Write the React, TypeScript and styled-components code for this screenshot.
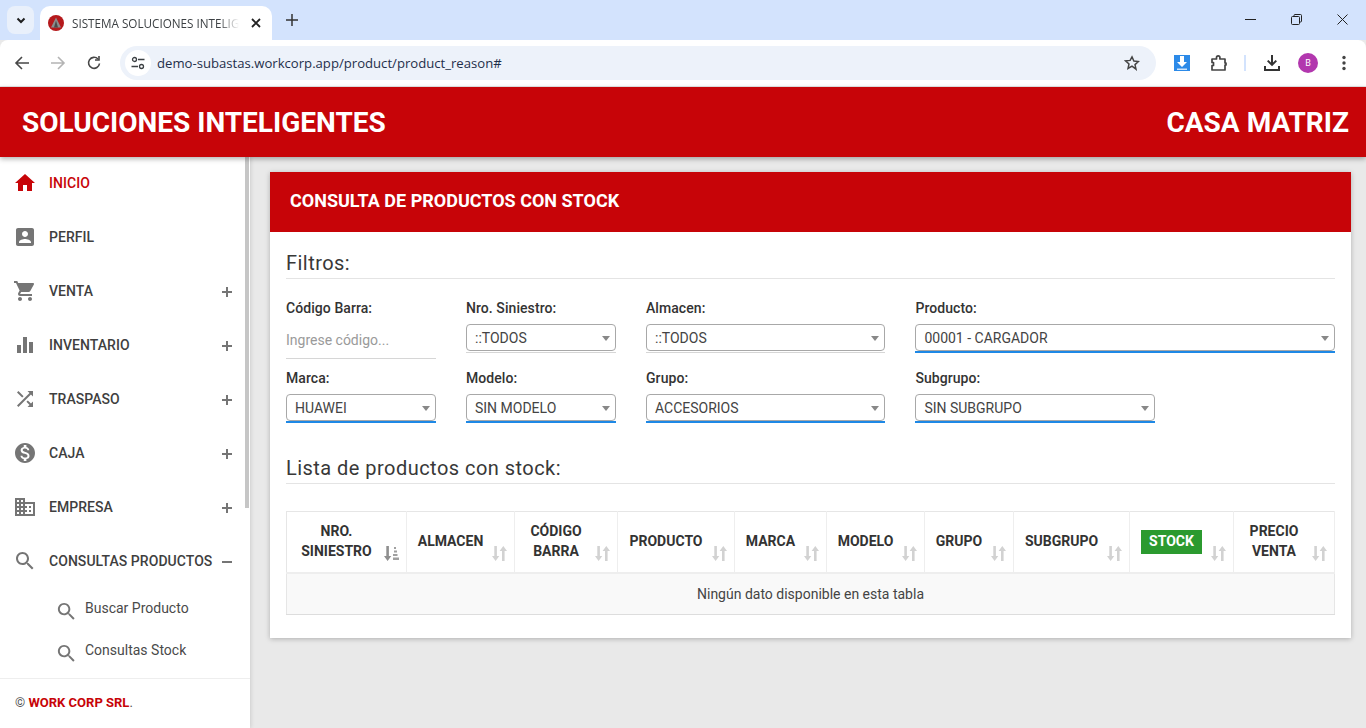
import React from "react";
import styled, { createGlobalStyle } from "styled-components";

const icons: Record<string, string> = {
  home: "M10 20v-6h4v6h5v-8h3L12 3 2 12h3v8z",
  profile:
    "M3 5v14c0 1.1.89 2 2 2h14c1.1 0 2-.9 2-2V5c0-1.1-.9-2-2-2H5c-1.11 0-2 .9-2 2zm12 4c0 1.66-1.34 3-3 3s-3-1.34-3-3 1.34-3 3-3 3 1.34 3 3zm-9 8c0-2 4-3.1 6-3.1s6 1.1 6 3.1v1H6v-1z",
  cart: "M7 18c-1.1 0-1.99.9-1.99 2S5.9 22 7 22s2-.9 2-2-.9-2-2-2zM1 2v2h2l3.6 7.59-1.35 2.45c-.16.28-.25.61-.25.96 0 1.1.9 2 2 2h12v-2H7.42c-.14 0-.25-.11-.25-.25l.03-.12.9-1.63h7.45c.75 0 1.41-.41 1.75-1.03l3.58-6.49c.08-.14.12-.31.12-.48 0-.55-.45-1-1-1H5.21l-.94-2H1zm16 16c-1.1 0-1.99.9-1.99 2s.89 2 1.99 2 2-.9 2-2-.9-2-2-2z",
  bars: "M10 20h4V4h-4v16zm-6 0h4v-8H4v8zM16 9v11h4V9h-4z",
  shuffle:
    "M10.59 9.17L5.41 4 4 5.41l5.17 5.17 1.42-1.41zM14.5 4l2.04 2.04L4 18.59 5.41 20 17.96 7.46 20 9.5V4h-5.5zm.33 9.41l-1.41 1.41 3.13 3.13L14.5 20H20v-5.5l-2.04 2.04-3.13-3.13z",
  money:
    "M12 2C6.48 2 2 6.48 2 12s4.48 10 10 10 10-4.48 10-10S17.52 2 12 2zm1.41 16.09V20h-2.67v-1.93c-1.71-.36-3.16-1.46-3.27-3.4h1.96c.1 1.05.82 1.87 2.65 1.87 1.96 0 2.4-.98 2.4-1.59 0-.83-.44-1.61-2.67-2.14-2.48-.6-4.18-1.62-4.18-3.67 0-1.72 1.39-2.84 3.11-3.21V4h2.67v1.95c1.86.45 2.79 1.86 2.85 3.39H14.3c-.05-1.11-.64-1.87-2.22-1.87-1.5 0-2.4.68-2.4 1.64 0 .84.65 1.39 2.67 1.91s4.18 1.39 4.18 3.91c-.01 1.83-1.38 2.83-3.12 3.16z",
  domain:
    "M12 7V3H2v18h20V7H12zM6 19H4v-2h2v2zm0-4H4v-2h2v2zm0-4H4V9h2v2zm0-4H4V5h2v2zm4 12H8v-2h2v2zm0-4H8v-2h2v2zm0-4H8V9h2v2zm0-4H8V5h2v2zm10 12h-8v-2h2v-2h-2v-2h2v-2h-2V9h8v10zm-2-8h-2v2h2v-2zm0 4h-2v2h2v-2z",
  search:
    "M15.5 14h-.79l-.28-.27C15.41 12.59 16 11.11 16 9.5 16 5.91 13.09 3 9.5 3S3 5.91 3 9.5 5.91 16 9.5 16c1.61 0 3.09-.59 4.23-1.57l.27.28v.79l5 4.99L20.49 19l-4.99-5zm-6 0C7.01 14 5 11.99 5 9.5S7.01 5 9.5 5 14 7.01 14 9.5 11.99 14 9.5 14z",
};

const GlobalStyle = createGlobalStyle`
  * { box-sizing: border-box; }
  html, body { margin: 0; height: 100%; overflow: hidden; }
  body { font-family: Roboto, "Liberation Sans", sans-serif; background: #e9e9e9; }
`;

const Page = styled.div`
  display: flex;
  flex-direction: column;
  width: 1366px;
  height: 728px;
  overflow: hidden;
`;

/* browser frame */
const TabStrip = styled.div`
  height: 40px;
  background: #d3e3fd;
  display: flex;
  align-items: flex-end;
  padding-left: 7px;
`;
const TabMenu = styled.div`
  width: 27px;
  height: 28px;
  margin: 0 6px 6px 0;
  border-radius: 8px;
  background: #e9f0fb;
  display: flex;
  align-items: center;
  justify-content: center;
`;
const Tab = styled.div`
  width: 232px;
  height: 34px;
  background: #fff;
  border-radius: 10px 10px 0 0;
  display: flex;
  align-items: center;
  padding: 0 11px 0 8px;
  font-family: "Open Sans", sans-serif;
  font-size: 11.7px;
  color: #3c4043;
`;
const TabTitle = styled.span`
  flex: 1;
  margin: 0 12px 0 8px;
  white-space: nowrap;
  overflow: hidden;
  -webkit-mask-image: linear-gradient(to right, #000 88%, transparent);
  mask-image: linear-gradient(to right, #000 88%, transparent);
`;
const NewTab = styled.div`
  margin: 0 0 10px 14px;
  height: 16px;
  display: flex;
`;
const WindowButtons = styled.div`
  margin-left: auto;
  display: flex;
  align-items: center;
  gap: 35px;
  padding: 0 18px 15px 0;
`;
const Toolbar = styled.div`
  height: 47px;
  background: #fff;
  border-radius: 8px 8px 0 0;
  display: flex;
  align-items: center;
  padding: 0 13px 0 14px;
  border-bottom: 1px solid #e6e6e6;
`;
const NavButtons = styled.div`
  display: flex;
  align-items: center;
  gap: 20px;
  width: 106px;
`;
const Omnibox = styled.div`
  width: 1036px;
  height: 34px;
  border-radius: 17px;
  background: #edf2fa;
  display: flex;
  align-items: center;
  padding: 0 16px 0 5px;
`;
const SiteBadge = styled.div`
  width: 26px;
  height: 26px;
  border-radius: 50%;
  background: #fff;
  display: flex;
  align-items: center;
  justify-content: center;
`;
const Url = styled.span`
  flex: 1;
  margin-left: 6px;
  font-family: "Open Sans", sans-serif;
  font-size: 13.14px;
  color: #1f2f4a;
`;
const ToolbarIcons = styled.div`
  display: flex;
  align-items: center;
  margin-left: 18px;
  gap: 18px;
`;
const ExtensionIcon = styled.svg`
  margin-right: 2px;
`;
const Divider = styled.div`
  width: 2px;
  height: 16px;
  background: #d3e3fd;
  margin-left: -2px;
`;
const Avatar = styled.div`
  width: 20px;
  height: 20px;
  border-radius: 50%;
  background: #b237ae;
  color: #fff;
  font-size: 9px;
  display: flex;
  align-items: center;
  justify-content: center;
  margin-right: 6px;
`;

/* app */
const Header = styled.header`
  height: 70px;
  flex: none;
  background: #c70408;
  color: #fff;
  display: flex;
  align-items: center;
  justify-content: space-between;
  padding: 0 17px 0 22px;
  font-size: 28px;
  font-weight: 700;
  box-shadow: 0 2px 5px rgba(0, 0, 0, 0.3);
  position: relative;
  z-index: 3;
`;
const Body = styled.div`
  flex: 1;
  display: flex;
  min-height: 0;
`;
const Sidebar = styled.aside`
  width: 250px;
  background: #fff;
  box-shadow: 1px 0 4px rgba(0, 0, 0, 0.12);
  position: relative;
  z-index: 2;
  display: flex;
  flex-direction: column;
`;
const ScrollThumb = styled.div`
  position: absolute;
  top: 0;
  right: 1px;
  width: 4px;
  height: 351px;
  background: #c6c6c6;
`;
const Menu = styled.nav`
  flex: 1;
  min-height: 0;
`;
const Item = styled.div`
  height: 54px;
  display: flex;
  align-items: center;
  padding: 0 18px 2px 13px;
`;
const ItemIcon = styled.svg<{ $active?: boolean }>`
  width: 24px;
  height: 24px;
  flex: none;
  fill: ${(p) => (p.$active ? "#c70408" : "#757575")};
`;
const ItemLabel = styled.span<{ $active?: boolean }>`
  flex: 1;
  margin-left: 12px;
  font-size: 14px;
  font-weight: 500;
  letter-spacing: 0.05px;
  color: ${(p) => (p.$active ? "#c70408" : "#3f3f3f")};
  white-space: nowrap;
`;
const Toggle = styled.span`
  width: 10px;
  height: 10px;
  flex: none;
  position: relative;
  top: 1px;
  &::before {
    content: "";
    position: absolute;
    left: 0;
    right: 0;
    top: 4px;
    height: 1.5px;
    background: #757575;
  }
`;
const Plus = styled(Toggle)`
  &::after {
    content: "";
    position: absolute;
    top: 0;
    bottom: 0;
    left: 4.25px;
    width: 1.5px;
    background: #757575;
  }
`;
const SubList = styled.div`
  padding-top: 6px;
`;
const SubItem = styled.div`
  height: 42px;
  display: flex;
  align-items: flex-start;
  padding: 0 0 0 55px;
`;
const SubIcon = styled.svg`
  width: 23px;
  height: 23px;
  fill: #757575;
  margin-top: 5px;
`;
const SubLabel = styled.span`
  margin: 3px 0 0 7px;
  font-size: 14px;
  color: #4a4a4a;
  line-height: 20px;
`;
const Footer = styled.footer`
  height: 50px;
  flex: none;
  border-top: 1px solid #eee;
  padding: 17px 0 0 15px;
  font-size: 13px;
  line-height: 14px;
  color: #555;
  b {
    color: #c70408;
    font-weight: 700;
  }
`;
const Main = styled.main`
  flex: 1;
  padding: 15px 15px 0 20px;
  min-width: 0;
`;
const Card = styled.section`
  background: #fff;
  box-shadow: 0 1px 5px rgba(0, 0, 0, 0.25);
  height: 466px;
`;
const CardTitle = styled.h2`
  margin: 0;
  height: 60px;
  background: #c70408;
  color: #fff;
  font-size: 18px;
  font-weight: 700;
  line-height: 57px;
  padding-left: 20px;
`;
const CardBody = styled.div`
  padding: 17px 16px 0;
`;
const SectionTitle = styled.h3`
  margin: 0;
  height: 30px;
  font-size: 20px;
  font-weight: 400;
  line-height: 28px;
  letter-spacing: 0.46px;
  color: #383838;
  border-bottom: 1px solid #e4e4e4;
`;
const FilterGrid = styled.div`
  display: grid;
  grid-template-columns: 150px 150px 239.4px 419.6px;
  column-gap: 30px;
  margin-top: 19px;
  margin-bottom: 16px;
`;
const Field = styled.div`
  height: 70px;
`;
const FieldLabel = styled.label`
  display: block;
  font-size: 14px;
  font-weight: 500;
  line-height: 20px;
  letter-spacing: 0.07px;
  color: #333;
  margin-bottom: 6px;
`;
const TextField = styled.div`
  height: 35px;
  border-bottom: 1px solid #d6d6d6;
  font-size: 14px;
  line-height: 33px;
  color: #9a9a9a;
`;
const SelectFrame = styled.div<{ $chosen?: boolean; $width?: number }>`
  height: 29px;
  width: ${(p) => (p.$width ? `${p.$width}px` : "100%")};
  border-bottom: ${(p) => (p.$chosen ? "2px solid #1e88e5" : "1px solid #d6d6d6")};
`;
const SelectValue = styled.div`
  height: 27px;
  position: relative;
  font-size: 14px;
  color: #444;
  line-height: 27px;
  padding-left: 8px;
  border: 1px solid #a8a8a8;
  border-radius: 4px;
  background: #fff;
  &::after {
    content: "";
    position: absolute;
    right: 5px;
    top: 11px;
    border-left: 4px solid transparent;
    border-right: 4px solid transparent;
    border-top: 5px solid #888;
  }
`;
const Table = styled.table`
  width: 1048px;
  margin-top: 27px;
  table-layout: fixed;
  border-collapse: collapse;
  border: 1px solid #e6e6e6;
`;
const Th = styled.th`
  height: 61px;
  position: relative;
  padding: 0 29px 2px 9px;
  font-size: 14px;
  font-weight: 700;
  line-height: 20px;
  color: #333;
  text-align: center;
  border-right: 1px solid #eee;
  border-bottom: 2px solid #eee;
`;
const SortIcon = styled.svg`
  position: absolute;
  right: 7px;
  bottom: 11px;
  width: 15px;
  height: 15px;
`;
const StockBadge = styled.span`
  display: inline-block;
  background: #2b9a2f;
  color: #fff;
  padding: 0 8px;
  height: 24px;
  margin-top: 2px;
  line-height: 23px;
`;
const EmptyCell = styled.td`
  height: 42px;
  background: #f9f9f9;
  text-align: center;
  font-size: 14px;
  color: #444;
  border-bottom: 1px solid #ddd;
`;

const MaterialIcon: React.FC<{ name: string; active?: boolean }> = ({ name, active }) => (
  <ItemIcon viewBox="0 0 24 24" $active={active}>
    <path d={icons[name]} />
  </ItemIcon>
);

const Select: React.FC<{ value: string; chosen?: boolean; width?: number }> = ({ value, chosen, width }) => (
  <SelectFrame $chosen={chosen} $width={width}>
    <SelectValue>{value}</SelectValue>
  </SelectFrame>
);

const menu = [
  { icon: "home", label: "INICIO", active: true },
  { icon: "profile", label: "PERFIL" },
  { icon: "cart", label: "VENTA", more: true },
  { icon: "bars", label: "INVENTARIO", more: true },
  { icon: "shuffle", label: "TRASPASO", more: true },
  { icon: "money", label: "CAJA", more: true },
  { icon: "domain", label: "EMPRESA", more: true },
];

const columns = [
  { width: 120, title: ["NRO.", "SINIESTRO"], sorted: true },
  { width: 108, title: ["ALMACEN"] },
  { width: 103, title: ["CÓDIGO", "BARRA"] },
  { width: 117, title: ["PRODUCTO"] },
  { width: 92, title: ["MARCA"] },
  { width: 98, title: ["MODELO"] },
  { width: 89, title: ["GRUPO"] },
  { width: 116, title: ["SUBGRUPO"] },
  { width: 104, title: ["STOCK"], badge: true },
  { width: 101, title: ["PRECIO", "VENTA"] },
];

const Sort: React.FC<{ sorted?: boolean }> = ({ sorted }) =>
  sorted ? (
    <SortIcon viewBox="0 0 15 15" fill="#8f8f8f">
      <path d="M2.300 0h2.600v10h2.400L3.600 15 0 10h2.300z" />
      <path d="M10 1h2v2h-2zM10 4.500h3v2h-3zM9 8h4.500v2H9zM9 11.500h6V14H9z" fill="#a0a0a0" />
    </SortIcon>
  ) : (
    <SortIcon viewBox="0 0 15 15" fill="#d2d2d2">
      <path d="M2.300 0h2.600v10h2.400L3.600 15 0 10h2.300z" />
      <path d="M10 15h2.600V5H15L11.300 0 7.600 5H10z" />
    </SortIcon>
  );

const App: React.FC = () => (
  <Page>
    <GlobalStyle />
    <TabStrip>
      <TabMenu>
        <svg width="12" height="12" viewBox="0 0 12 12" fill="none" stroke="#1f1f1f" strokeWidth="2">
          <path d="M2.500 4.500 6 8l3.500-3.500" />
        </svg>
      </TabMenu>
      <Tab>
        <svg width="16" height="16" viewBox="0 0 16 16">
          <circle cx="8" cy="8" r="8" fill="#b5191c" />
          <path d="M8 2.500 13 12.500H3z" fill="#8d8d8d" />
          <path d="M8 5.500 10 12.500H6z" fill="#4a4a4a" />
        </svg>
        <TabTitle>SISTEMA SOLUCIONES INTELIGENTES</TabTitle>
        <svg width="10" height="10" viewBox="0 0 10 10" stroke="#222" strokeWidth="1.800">
          <path d="M1 1l8 8M9 1l-8 8" />
        </svg>
      </Tab>
      <NewTab>
        <svg width="12" height="12" viewBox="0 0 12 12" stroke="#333" strokeWidth="1.500">
          <path d="M6 0v12M0 6h12" />
        </svg>
      </NewTab>
      <WindowButtons>
        <svg width="11" height="11" viewBox="0 0 11 11" stroke="#222" strokeWidth="1">
          <path d="M0 5.500h11" />
        </svg>
        <svg width="11" height="11" viewBox="0 0 11 11" fill="none" stroke="#222" strokeWidth="1">
          <rect x=".5" y="2.500" width="8" height="8" rx="1" />
          <path d="M3 2.500V1.500a1 1 0 0 1 1-1h5.500a1 1 0 0 1 1 1V7a1 1 0 0 1-1 1H8.500" />
        </svg>
        <svg width="11" height="11" viewBox="0 0 11 11" stroke="#222" strokeWidth="1">
          <path d="M.5.5l10 10M10.500.5l-10 10" />
        </svg>
      </WindowButtons>
    </TabStrip>
    <Toolbar>
      <NavButtons>
        <svg width="16" height="16" viewBox="0 0 16 16" fill="none" stroke="#474747" strokeWidth="1.600">
          <path d="M15 8H2M8 2 2 8l6 6" />
        </svg>
        <svg width="16" height="16" viewBox="0 0 16 16" fill="none" stroke="#b4b4b4" strokeWidth="1.600">
          <path d="M1 8h13M8 2l6 6-6 6" />
        </svg>
        <svg width="16" height="16" viewBox="0 0 16 16" fill="none" stroke="#474747" strokeWidth="1.600">
          <path d="M13.500 8.500A5.500 5.500 0 1 1 12 4" />
          <path d="M13 1v4H9" />
        </svg>
      </NavButtons>
      <Omnibox>
        <SiteBadge>
          <svg width="14" height="14" viewBox="0 0 14 14" fill="none" stroke="#3c4043" strokeWidth="1.300">
            <circle cx="3.500" cy="3.500" r="2" />
            <path d="M7 3.500h6.500M.5 10.500H7" />
            <circle cx="10.500" cy="10.500" r="2" />
          </svg>
        </SiteBadge>
        <Url>demo-subastas.workcorp.app/product/product_reason#</Url>
        <svg width="16" height="16" viewBox="0 0 24 24" fill="none" stroke="#444" strokeWidth="2.200">
          <path d="M12 2.800l2.800 6.300 6.800.7-5.100 4.600 1.500 6.800L12 16.700l-6 3.500 1.500-6.800-5.100-4.600 6.800-.7z" />
        </svg>
      </Omnibox>
      <ToolbarIcons>
        <ExtensionIcon width="16" height="16" viewBox="0 0 16 16">
          <rect width="16" height="16" fill="#2c8ae8" />
          <path d="M6 1h4v6h3l-5 5-5-5h3z" fill="#fff" />
          <path d="M3 13.500h10V15H3z" fill="#cfe5fb" />
        </ExtensionIcon>
        <svg width="18" height="18" viewBox="0 0 18 18" fill="none" stroke="#444" strokeWidth="1.700">
          <path d="M2 5h4.500V3.500a1.700 1.700 0 0 1 3.400 0V5H15v4h1v2h-1v5H2v-4.500h1.500v-3H2z" strokeLinejoin="round" />
        </svg>
        <Divider />
        <svg width="16" height="16" viewBox="0 0 16 16" fill="#333">
          <path d="M7 0h2v7.500l2.600-2.600L13 6.300 8 11.300l-5-5 1.400-1.400L7 7.500z" />
          <path d="M0 11h2v3h12v-3h2v5H0z" />
        </svg>
        <Avatar>B</Avatar>
        <svg width="4" height="16" viewBox="0 0 4 16" fill="#444">
          <circle cx="2" cy="2.500" r="1.700" />
          <circle cx="2" cy="8" r="1.700" />
          <circle cx="2" cy="13.500" r="1.700" />
        </svg>
      </ToolbarIcons>
    </Toolbar>

    <Header>
      <span>SOLUCIONES INTELIGENTES</span>
      <span>CASA MATRIZ</span>
    </Header>
    <Body>
      <Sidebar>
        <ScrollThumb />
        <Menu>
          {menu.map((m) => (
            <Item key={m.label}>
              <MaterialIcon name={m.icon} active={m.active} />
              <ItemLabel $active={m.active}>{m.label}</ItemLabel>
              {m.more && <Plus />}
            </Item>
          ))}
          <Item>
            <MaterialIcon name="search" />
            <ItemLabel>CONSULTAS PRODUCTOS</ItemLabel>
            <Toggle />
          </Item>
          <SubList>
            <SubItem>
              <SubIcon viewBox="0 0 24 24">
                <path d={icons.search} />
              </SubIcon>
              <SubLabel>Buscar Producto</SubLabel>
            </SubItem>
            <SubItem>
              <SubIcon viewBox="0 0 24 24">
                <path d={icons.search} />
              </SubIcon>
              <SubLabel>Consultas Stock</SubLabel>
            </SubItem>
          </SubList>
        </Menu>
        <Footer>
          © <b>WORK CORP SRL</b>.
        </Footer>
      </Sidebar>
      <Main>
        <Card>
          <CardTitle>CONSULTA DE PRODUCTOS CON STOCK</CardTitle>
          <CardBody>
            <SectionTitle>Filtros:</SectionTitle>
            <FilterGrid>
              <Field>
                <FieldLabel>Código Barra:</FieldLabel>
                <TextField>Ingrese código...</TextField>
              </Field>
              <Field>
                <FieldLabel>Nro. Siniestro:</FieldLabel>
                <Select value="::TODOS" />
              </Field>
              <Field>
                <FieldLabel>Almacen:</FieldLabel>
                <Select value="::TODOS" />
              </Field>
              <Field>
                <FieldLabel>Producto:</FieldLabel>
                <Select value="00001 - CARGADOR" chosen />
              </Field>
              <Field>
                <FieldLabel>Marca:</FieldLabel>
                <Select value="HUAWEI" chosen />
              </Field>
              <Field>
                <FieldLabel>Modelo:</FieldLabel>
                <Select value="SIN MODELO" chosen />
              </Field>
              <Field>
                <FieldLabel>Grupo:</FieldLabel>
                <Select value="ACCESORIOS" chosen />
              </Field>
              <Field>
                <FieldLabel>Subgrupo:</FieldLabel>
                <Select value="SIN SUBGRUPO" chosen width={240} />
              </Field>
            </FilterGrid>
            <SectionTitle>Lista de productos con stock:</SectionTitle>
            <Table>
              <colgroup>
                {columns.map((c) => (
                  <col key={c.title[0]} width={c.width} />
                ))}
              </colgroup>
              <thead>
                <tr>
                  {columns.map((c) => (
                    <Th key={c.title[0]}>
                      {c.badge ? (
                        <StockBadge>{c.title[0]}</StockBadge>
                      ) : (
                        c.title.map((t) => <div key={t}>{t}</div>)
                      )}
                      <Sort sorted={c.sorted} />
                    </Th>
                  ))}
                </tr>
              </thead>
              <tbody>
                <tr>
                  <EmptyCell colSpan={10}>Ningún dato disponible en esta tabla</EmptyCell>
                </tr>
              </tbody>
            </Table>
          </CardBody>
        </Card>
      </Main>
    </Body>
  </Page>
);

export default App;
